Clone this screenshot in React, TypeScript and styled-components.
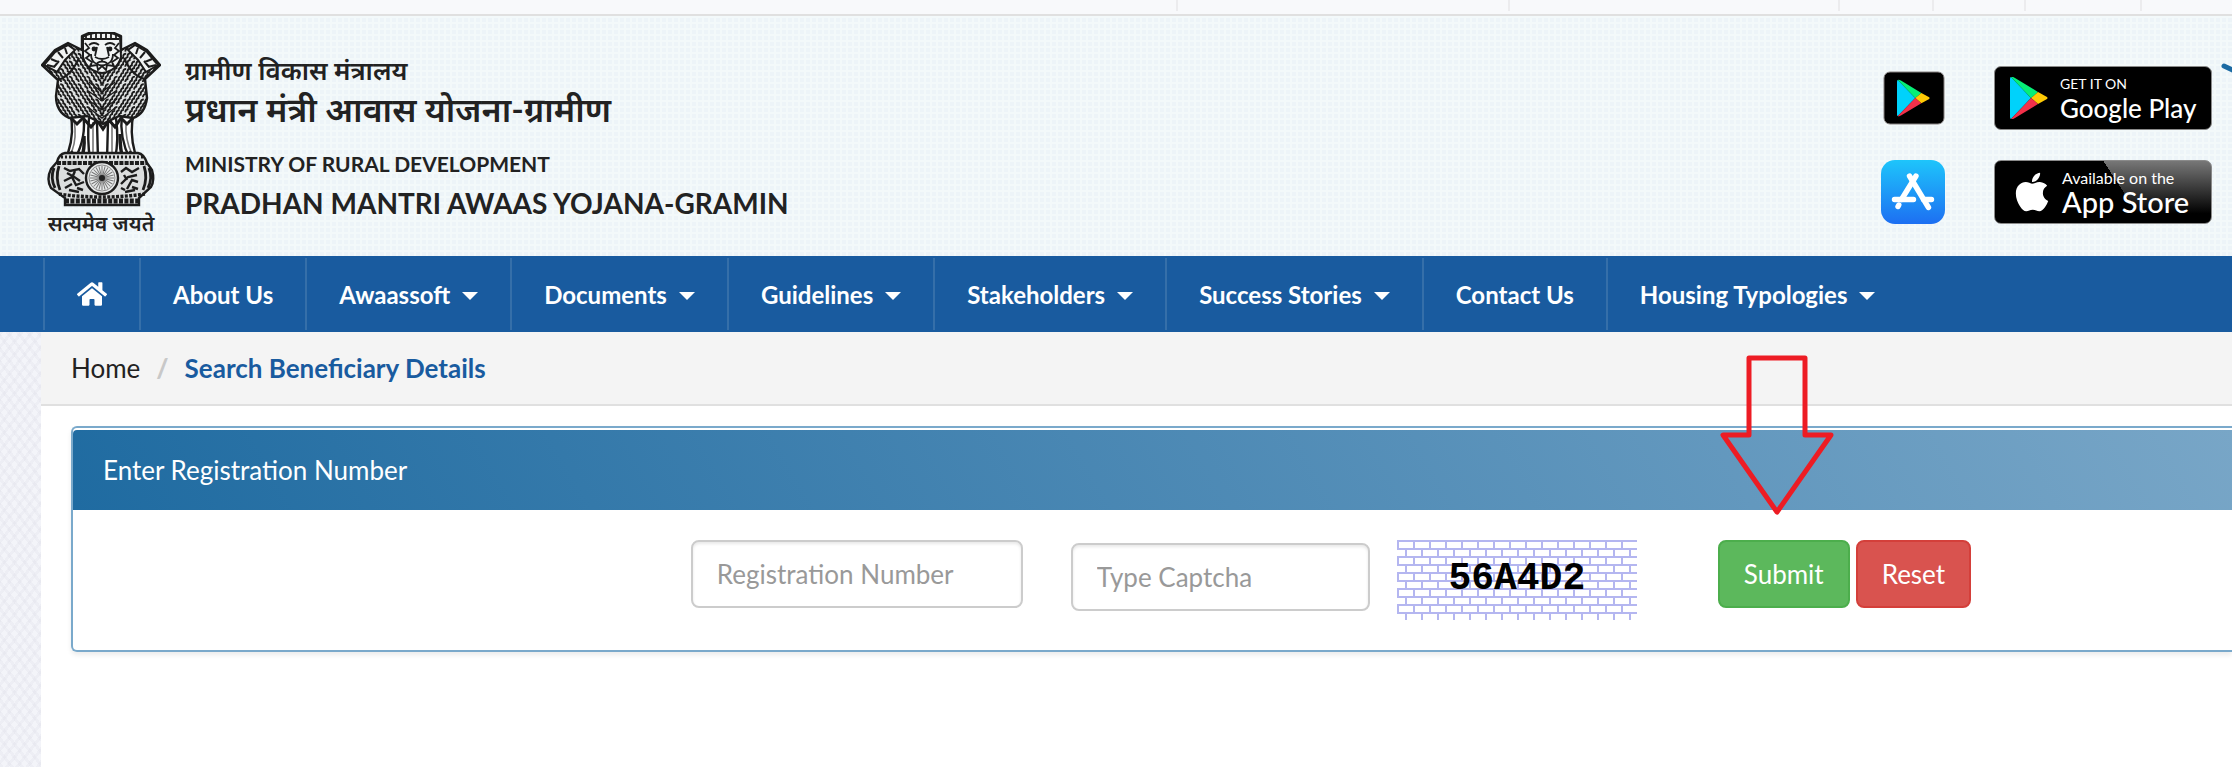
import React from "react";
import styled, { createGlobalStyle } from "styled-components";
import { FaApple, FaHome } from "react-icons/fa";

const Global = createGlobalStyle`
  * { box-sizing: border-box; }
  html, body, #root { min-height: 100vh; }
  body {
    margin: 0;
    color: #212529;
    font-family: Lato, "Noto Sans", sans-serif;
    overflow-x: hidden;
  }
  #root { display: flex; }
  h1, h2, p, ul, ol { margin: 0; padding: 0; }
`;

const Page = styled.div`
  flex: 1;
  min-width: 0;
  display: flex;
  flex-direction: column;
  background-color: #f3f4f9;
  background-image:
    repeating-linear-gradient(52deg, rgba(214, 214, 226, 0.2) 0 3px, transparent 3px 8px),
    repeating-linear-gradient(-52deg, rgba(214, 214, 226, 0.2) 0 3px, transparent 3px 8px);
`;

const UtilityBar = styled.div`
  display: flex;
  justify-content: flex-end;
  height: 16px;
  padding-bottom: 3px;
  background: #f8f9fb;
  border-bottom: 2px solid #e0e0e0;
`;

const UtilityCell = styled.div<{ $width: number }>`
  width: ${(p) => p.$width}px;
  border-left: 2px solid #ececee;
`;

const Header = styled.header`
  display: flex;
  align-items: flex-start;
  padding: 16px 0 0 41px;
  height: 240px;
  background-color: #f3f9fa;
  background-image:
    linear-gradient(90deg, #f3f9fa 2px, transparent 2px),
    linear-gradient(#f3f9fa 2px, #edf4f8 2px);
  background-size: 6px 6px;
`;

const Emblem = styled.div`
  width: 120px;
  display: flex;
  flex-direction: column;
  align-items: center;
  svg { display: block; }
`;

const Motto = styled.span`
  font-size: 21px;
  line-height: 30px;
  font-weight: 600;
  color: #222;
  white-space: nowrap;
`;

const Titles = styled.div`
  flex: 1;
  padding: 20px 0 0 24px;
  font-weight: 700;
  color: #222;
  white-space: nowrap;
`;

const HindiTitles = styled.div`
  font-weight: 600;
  p:first-child { font-size: 26px; line-height: 36px; }
  p:last-child { font-size: 34px; line-height: 42px; }
`;

const EnglishTitles = styled.div`
  padding-top: 16px;
  p { font-size: 21px; line-height: 36px; }
  h1 { font-size: 28px; line-height: 42px; }
`;

const Stores = styled.div`
  display: grid;
  grid-template-columns: 64px 218px;
  grid-template-rows: 64px 64px;
  gap: 30px 49px;
  align-items: center;
  justify-items: center;
  padding-top: 34px;
  svg { display: block; }
`;

const Badge = styled.a<{ $glossy?: boolean }>`
  display: flex;
  align-items: center;
  gap: ${(p) => (p.$glossy ? 8 : 12)}px;
  width: 218px;
  height: 64px;
  padding-left: 15px;
  border: 1px solid #8a8a8a;
  border-radius: 7px;
  color: #fff;
  text-decoration: none;
  white-space: nowrap;
  background: ${(p) =>
    p.$glossy
      ? "linear-gradient(57deg, #000 0 58%, transparent 58%), linear-gradient(#777, #000 85%)"
      : "#000"};
`;

const BadgeText = styled.span`
  display: flex;
  flex-direction: column;
`;

const BadgeSmall = styled.span<{ $size: number }>`
  font-size: ${(p) => p.$size}px;
  line-height: 20px;
`;

const BadgeLarge = styled.span<{ $size: number }>`
  font-size: ${(p) => p.$size}px;
  line-height: 28px;
  font-weight: 500;
`;

const Swoosh = styled.svg`
  display: block;
  margin: 30px 0 0 9px;
`;

const Nav = styled.nav`
  background: #195b9f;
  padding: 2px 0 2px 43px;
`;

const NavList = styled.ul`
  display: flex;
  list-style: none;
`;

const NavItem = styled.li`
  border-left: 2px solid #356fa9;
`;

const NavLink = styled.a`
  display: flex;
  align-items: center;
  gap: 12px;
  height: 72px;
  padding: 0 32px;
  color: #fff;
  font-size: 24px;
  font-weight: 700;
  text-decoration: none;
  white-space: nowrap;
`;

const Caret = styled.span`
  border: 8px solid transparent;
  border-top-color: #fff;
  border-bottom: 0;
  margin-top: 4px;
`;

const Content = styled.main`
  flex: 1;
  margin-left: 41px;
  background: #fff;
`;

const Crumbs = styled.ol`
  display: flex;
  gap: 16px;
  align-items: center;
  height: 74px;
  padding-left: 30px;
  list-style: none;
  font-size: 26px;
  line-height: 30px;
  background: #f4f4f4;
  border-bottom: 2px solid #e0e0e0;
  a { color: #222; text-decoration: none; }
`;

const Divider = styled.li`
  color: #c8c8c8;
  font-weight: 900;
`;

const Current = styled.li`
  color: #195b9f;
  font-weight: 700;
`;

const Panel = styled.section`
  position: relative;
  margin: 20px 0 0 30px;
  padding-top: 2px;
  border: 2px solid #7aa9cb;
  border-right: 0;
  border-radius: 6px 0 0 6px;
  box-shadow: 0 3px 5px rgba(0, 0, 0, 0.08);
`;

const PanelHeading = styled.h2`
  height: 80px;
  padding-left: 30px;
  border-radius: 4px 0 0 0;
  background: linear-gradient(60deg, #1f6ba1, #78a6c7);
  color: #fff;
  font-size: 26px;
  font-weight: 400;
  line-height: 80px;
`;

const Form = styled.form`
  display: flex;
  align-items: flex-start;
  padding: 30px 0;
  &::before { content: ""; flex: 618; }
  &::after { content: ""; flex: 261; }
`;

const Field = styled.input<{ $width: number; $lowered?: boolean }>`
  width: ${(p) => p.$width}px;
  height: 68px;
  margin: ${(p) => (p.$lowered ? "3px 27px 0 48px" : "0")};
  padding: 0 24px;
  border: 2px solid #ccc;
  border-radius: 8px;
  background: #fff;
  box-shadow: inset 0 2px 3px rgba(0, 0, 0, 0.09);
  font: 400 26px Lato, sans-serif;
  color: #555;
  &::placeholder { color: #999; opacity: 1; }
`;

const Captcha = styled.div`
  display: grid;
  width: 240px;
  height: 80px;
  margin-right: 81px;
  svg, span { grid-area: 1 / 1; }
  span {
    place-self: center;
    padding-bottom: 4px;
    color: #000;
    font: 700 38px "Liberation Mono", monospace;
  }
`;

const Buttons = styled.div`
  display: flex;
  gap: 6px;
`;

const Button = styled.button<{ $tone: "go" | "stop" }>`
  height: 68px;
  padding: 0 24px;
  border: 2px solid ${(p) => (p.$tone === "go" ? "#4cae4c" : "#d43f3a")};
  border-radius: 8px;
  background: ${(p) => (p.$tone === "go" ? "#5cb85c" : "#d9534f")};
  color: #fff;
  font: 400 26px Lato, sans-serif;
`;

const Pointer = styled.svg`
  position: absolute;
  top: -74px;
  left: 76.25%;
  pointer-events: none;
`;

const PlayShapes = () => (
  <>
    <path d="M1 0 L21 21 L1 42 Q0 42 0 40 V2 Q0 0 1 0Z" fill="#00d2fb" />
    <path d="M1 0 Q2 -1 5 1 L28 15 L21 21Z" fill="#06ef77" />
    <path d="M28 15 L37 20 Q38 21 37 22 L28 27 L21 21Z" fill="#ffca05" />
    <path d="M21 21 L28 27 L5 41 Q2 43 1 42Z" fill="#f2304a" />
  </>
);

const PlayMark = () => (
  <svg width="38" height="42" viewBox="0 0 38 42" aria-hidden="true">
    <PlayShapes />
  </svg>
);

const PlayTile = () => (
  <svg width="64" height="54" viewBox="0 0 64 54" role="img" aria-label="Google Play">
    <rect x="3" y="1" width="60" height="52" rx="6" fill="#000" stroke="#858080" />
    <g transform="translate(16 9) scale(.87 .86)">
      <PlayShapes />
    </g>
  </svg>
);

const AppStoreTile = () => (
  <svg width="64" height="64" viewBox="0 0 64 64" role="img" aria-label="App Store">
    <defs>
      <linearGradient id="sky" x1="0" y1="0" x2="0" y2="1">
        <stop offset="0" stopColor="#1ec5fb" />
        <stop offset="1" stopColor="#1d6ff2" />
      </linearGradient>
    </defs>
    <rect width="64" height="64" rx="14" fill="url(#sky)" />
    <g stroke="#fff" strokeWidth="5.4" strokeLinecap="round" fill="none">
      <path d="M35 16 L20.5 39.5 M17.8 45 L17 46.5" />
      <path d="M28.5 16 L47.5 47.5" />
      <path d="M13.5 39.5 H32.5 M42.5 39.5 H50.5" />
    </g>
  </svg>
);

// Rows of short locks of hair, mirrored about the centre line.
const curls = (rows: number, cols: number) => {
  let d = "";
  for (let r = 0; r < rows; r++) {
    for (let c = 0; c < cols; c++) {
      const x = 61 + (c + 0.5) * 4.4 + (r % 2) * 2.2;
      const m = 122 - x;
      const y = 5 + r * 3.8 + ((c * 7 + r * 3) % 4) * 0.5;
      d += `M${x} ${y}q-3 .2 -3.2 3.2M${m} ${y}q3 .2 3.2 3.2`;
    }
  }
  return d;
};

const MANE =
  "M27 11 L41 18 V4 L48 1 H73 L80 4 V18 L94 11 L106 18 L119 33 L104 47 L106 66 Q104 82 92 86 L78 84 L62 92 L46 84 L28 86 Q15 80 15 64 L17 48 L1 33 L14 18Z";

const LionCapital = () => (
  <svg width="120" height="176" viewBox="0 0 120 176" role="img" aria-label="State Emblem of India">
    <defs>
      <clipPath id="manes">
        <path d={MANE} />
      </clipPath>
    </defs>
    <path d="M29 80 Q34 100 27 121 L35 128 H88 L94 121 Q88 100 93 80Z" fill="#fff" stroke="#1c1c1c" strokeWidth="2.4" />
    <g fill="none" stroke="#1c1c1c" strokeWidth="2.4">
      <path d="M42 82 Q46 104 34 127 M48 86 Q46 108 49 127 M56 90 L57 128 M67 90 L66 128 M75 86 Q78 108 74 127 M81 82 Q78 106 89 127" />
      <path d="M52 90 V126 M71 90 V126 M85 90 Q84 108 91 122 M33 88 Q36 106 31 119" stroke="#777" strokeWidth="1.6" />
      <path d="M43 104 Q44 118 40 127 M79 102 Q79 118 82 127" strokeWidth="3.4" />
      <path d="M30 119 l5 5 l-7 3 M90 119 l-4 5 l7 3 M54 122 h14 M38 125 l6 -4 M76 123 l7 3" />
      <path d="M30 86 L36 92 L42 86 L50 95 L56 88 L62 97 L68 88 L74 95 L80 86 L86 92 L92 86" strokeWidth="3" />
    </g>
    <path d={MANE} fill="#dfe2e2" stroke="#1c1c1c" strokeWidth="2.4" strokeLinejoin="round" />
    <g clipPath="url(#manes)" fill="none" stroke="#1c1c1c">
      <path d={curls(23, 13)} strokeWidth="1.7" />
      <path d="M17 48 Q30 44 38 26 M104 47 Q91 44 83 26" strokeWidth="2" />
      <path d="M48 50 L61 60 L74 50 M46 58 L61 69 L76 58 M46 67 L61 78 L76 67 M48 76 L61 86 L74 76" strokeWidth="1.4" />
    </g>
    <g fill="#f2f4f4" stroke="#1c1c1c" strokeWidth="2">
      <path d="M14 20 L27 13 L34 18 L24 28 L16 40 L3 33Z" />
      <path d="M106 20 L94 13 L87 18 L97 28 L105 40 L117 33Z" />
      <path d="M10 27 l7 3 M17 20 l5 6 M6 33 l8 2 M24 16 l2 6 M13 35 l5 -6 M111 27 l-7 3 M104 20 l-5 6 M115 33 l-8 2 M97 16 l-2 6 M108 35 l-5 -6" fill="none" />
      <path d="M42 5 Q50 0 61 1 Q72 0 79 5 L80 25 Q76 39 61 41 Q46 39 42 25Z" />
    </g>
    <g fill="none" stroke="#1c1c1c" strokeWidth="1.8">
      <path d="M43 7 H78 M45 3 v5 M50 1 v6 M55 1 v6 M60 1 v6 M65 1 v6 M70 1 v6 M75 2 v6" />
      <path d="M48 13 q5 -4 10 0 M64 13 q5 -4 10 0 M56 15 l-2 9 M66 15 l2 9 M54 25 q7 4 14 0 M50 22 q0 8 6 10 q5 3 10 0 q6 -2 6 -10 M56 31 q5 -3 10 0 M61 26 v3" />
      <path d="M44 11 l4 5 l-4 3 l5 4 l-4 3 l6 4 l-2 4 l7 -1 l1 5 l4 -4 l4 4 l1 -5 l7 1 l-2 -4 l6 -4 l-4 -3 l5 -4 l-4 -3 l4 -5" />
    </g>
    <circle cx="53" cy="17" r="2.400" fill="#1c1c1c" />
    <circle cx="69" cy="17" r="2.400" fill="#1c1c1c" />
    <path d="M24 121 H97 Q103 122 106 131 L111 138 Q114 148 110 155 L98 166 V173 H24 V166 L10 156 Q5 147 10 137 L16 130 Q18 122 24 121Z" fill="#dcdede" stroke="#1c1c1c" strokeWidth="2.4" />
    <g fill="none" stroke="#1c1c1c">
      <path d="M20 125 H102" strokeWidth="3" strokeDasharray="2 2" />
      <path d="M16 131 H106" strokeWidth="4" strokeDasharray="4 1.2" />
      <path d="M18 162 Q60 168 104 162" strokeWidth="3.4" strokeDasharray="3 1.4" />
      <path d="M24 169 H98" strokeWidth="5" strokeDasharray="4 1.4" />
      <path d="M13 136 Q9 146 14 156 M18 134 Q14 146 19 158 M108 136 Q112 146 107 156 M103 134 Q107 146 102 158" strokeWidth="2.8" />
      <path d="M23 136 l6 3 l9 -2 l5 5 M26 141 q8 4 13 8 M23 149 l8 -4 l4 8 l8 -3 M24 156 l7 -4 M36 156 l6 2 M34 139 l-3 7 M28 158 l10 2" strokeWidth="2.4" />
      <path d="M98 136 l-7 4 l-6 -4 l-5 4 M96 143 l-9 2 l-7 7 M97 150 l-6 -2 l-5 9 M83 143 l3 5 M97 157 l-6 -2 M80 156 l4 2 M84 160 l10 -2" strokeWidth="2.4" />
    </g>
    <circle cx="61" cy="146" r="16" fill="#e9ebeb" stroke="#1c1c1c" strokeWidth="2.4" />
    <circle cx="61" cy="146" r="13" fill="none" stroke="#8c8c8c" />
    <g stroke="#777" strokeWidth="1">
      {Array.from({ length: 12 }, (_, i) => (
        <path key={i} d="M61 134 V158" transform={`rotate(${i * 15} 61 146)`} />
      ))}
    </g>
    <circle cx="61" cy="146" r="3" fill="#222" />
  </svg>
);

const Bricks = () => (
  <svg width="240" height="80" aria-hidden="true">
    <defs>
      <pattern id="bricks" width="16" height="16" patternUnits="userSpaceOnUse">
        <path d="M0 1 H16 M0 9 H16 M1 0 V8 M9 8 V16" fill="none" stroke="#b4b6f0" strokeWidth="2" />
      </pattern>
    </defs>
    <rect width="240" height="80" fill="url(#bricks)" />
  </svg>
);

const menu = [
  { label: "About Us" },
  { label: "Awaassoft", more: true },
  { label: "Documents", more: true },
  { label: "Guidelines", more: true },
  { label: "Stakeholders", more: true },
  { label: "Success Stories", more: true },
  { label: "Contact Us" },
  { label: "Housing Typologies", more: true },
];

export default function App() {
  return (
    <Page>
      <Global />
      <UtilityBar>
        {[332, 330, 94, 92, 116, 92].map((w, i) => (
          <UtilityCell key={i} $width={w} />
        ))}
      </UtilityBar>
      <Header>
        <Emblem>
          <LionCapital />
          <Motto lang="hi">सत्यमेव जयते</Motto>
        </Emblem>
        <Titles>
          <HindiTitles lang="hi">
            <p>ग्रामीण विकास मंत्रालय</p>
            <p>प्रधान मंत्री आवास योजना-ग्रामीण</p>
          </HindiTitles>
          <EnglishTitles>
            <p>MINISTRY OF RURAL DEVELOPMENT</p>
            <h1>PRADHAN MANTRI AWAAS YOJANA-GRAMIN</h1>
          </EnglishTitles>
        </Titles>
        <Stores>
          <PlayTile />
          <Badge href="#google-play">
            <PlayMark />
            <BadgeText>
              <BadgeSmall $size={14}>GET IT ON</BadgeSmall>
              <BadgeLarge $size={26}>Google Play</BadgeLarge>
            </BadgeText>
          </Badge>
          <AppStoreTile />
          <Badge href="#app-store" $glossy>
            <FaApple size={44} />
            <BadgeText>
              <BadgeSmall $size={16}>Available on the</BadgeSmall>
              <BadgeLarge $size={29}>App Store</BadgeLarge>
            </BadgeText>
          </Badge>
        </Stores>
        <Swoosh width="11" height="14" viewBox="0 0 11 14" aria-hidden="true">
          <path d="M3 4 L14 9" stroke="#1b6aa3" strokeWidth="5" strokeLinecap="round" />
        </Swoosh>
      </Header>
      <Nav>
        <NavList>
          <NavItem>
            <NavLink href="#home" aria-label="Home">
              <FaHome size={30} />
            </NavLink>
          </NavItem>
          {menu.map((m) => (
            <NavItem key={m.label}>
              <NavLink href="#">
                {m.label}
                {m.more && <Caret />}
              </NavLink>
            </NavItem>
          ))}
        </NavList>
      </Nav>
      <Content>
        <Crumbs>
          <li>
            <a href="#home">Home</a>
          </li>
          <Divider aria-hidden="true">/</Divider>
          <Current>Search Beneficiary Details</Current>
        </Crumbs>
        <Panel>
          <PanelHeading>Enter Registration Number</PanelHeading>
          <Form>
            <Field $width={332} aria-label="Registration Number" placeholder="Registration Number" />
            <Field $width={299} $lowered aria-label="Type Captcha" placeholder="Type Captcha" />
            <Captcha>
              <Bricks />
              <span>56A4D2</span>
            </Captcha>
            <Buttons>
              <Button type="submit" $tone="go">Submit</Button>
              <Button type="reset" $tone="stop">Reset</Button>
            </Buttons>
          </Form>
          <Pointer width="116" height="164" viewBox="0 0 116 164" aria-hidden="true">
            <path d="M30 4 H86 V81 H112 L58 158 L4 81 H30Z" fill="none" stroke="#ed1c24" strokeWidth="5" strokeLinejoin="round" />
          </Pointer>
        </Panel>
      </Content>
    </Page>
  );
}
